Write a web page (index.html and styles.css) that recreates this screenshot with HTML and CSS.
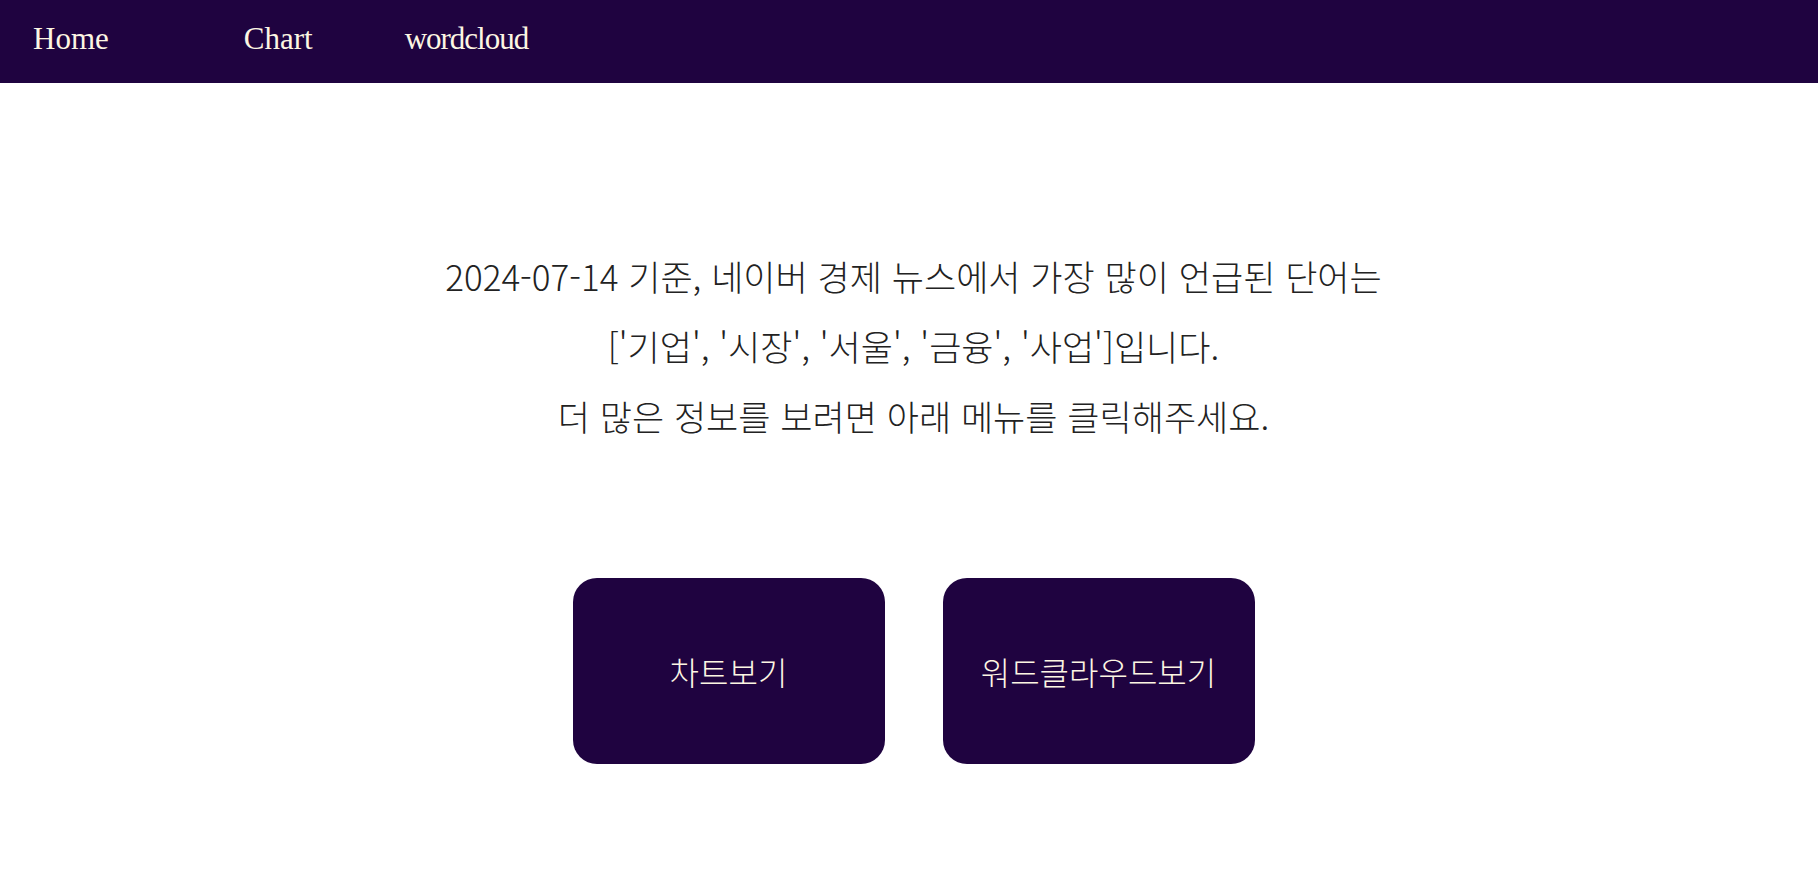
FILE: index.html
```html
<!DOCTYPE html>
<html lang="ko">
<head>
<meta charset="utf-8">
<title>Home</title>
<link rel="stylesheet" href="styles.css">
</head>
<body>
<nav class="nav">
  <a class="nav-link nav-home" href="#">Home</a>
  <a class="nav-link nav-chart" href="#">Chart</a>
  <a class="nav-link nav-word" href="#">wordcloud</a>
</nav>
<main class="main">
  <section class="intro">
    <p class="line">2024-07-14 기준, 네이버 경제 뉴스에서 가장 많이 언급된 단어는</p>
    <p class="line">['기업', '시장', '서울', '금융', '사업']입니다.</p>
    <p class="line">더 많은 정보를 보려면 아래 메뉴를 클릭해주세요.</p>
  </section>
  <div class="buttons">
    <a class="btn" href="#">차트보기</a>
    <a class="btn" href="#">워드클라우드보기</a>
  </div>
</main>
</body>
</html>
```
FILE: styles.css
```css
html, body {
  margin: 0;
  padding: 0;
  background: #ffffff;
}
body {
  font-family: "Noto Sans CJK KR", "Noto Sans", sans-serif;
}
.nav {
  height: 83px;
  background: #1f0340;
  display: flex;
  align-items: flex-start;
}
.nav-link {
  font-family: "Liberation Serif", "Noto Sans CJK KR", serif;
  font-size: 31px;
  line-height: 1;
  color: #fdf6e3;
  text-decoration: none;
  padding-top: 23px;
}
.nav-home { margin-left: 33px; }
.nav-chart { margin-left: 135px; }
.nav-word { margin-left: 92px; letter-spacing: -1px; }

.main {
  padding-left: 9px;
}
.intro {
  padding-top: 158px;
  text-align: center;
}
.line {
  margin: 0;
  font-size: 35px;
  font-weight: 300;
  line-height: 70px;
  color: #222222;
}
.buttons {
  display: flex;
  justify-content: center;
  gap: 58px;
  margin-top: 127px;
}
.btn {
  width: 312px;
  height: 186px;
  border-radius: 24px;
  background: #1f0340;
  color: #fdf6e3;
  font-size: 32px;
  font-weight: 300;
  display: flex;
  align-items: center;
  justify-content: center;
  text-decoration: none;
}
```
